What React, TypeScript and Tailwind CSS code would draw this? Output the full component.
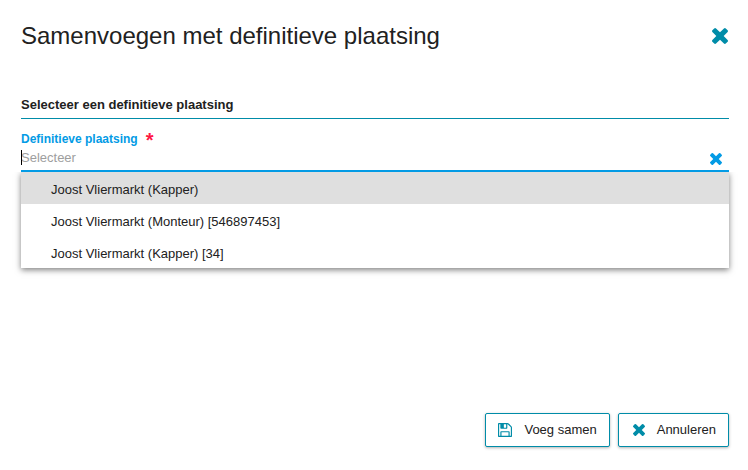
import { useState } from 'react';

const options = [
  'Joost Vliermarkt (Kapper)',
  'Joost Vliermarkt (Monteur) [546897453]',
  'Joost Vliermarkt (Kapper) [34]',
];

function CrossIcon({ className }: { className: string }) {
  return (
    <svg viewBox="302 366 1188 1188" fill="currentColor" aria-hidden="true" className={className}>
      <path d="M1490 1322q0 40-28 68l-136 136q-28 28-68 28t-68-28l-294-294-294 294q-28 28-68 28t-68-28l-136-136q-28-28-28-68t28-68l294-294-294-294q-28-28-28-68t28-68l136-136q28-28 68-28t68 28l294 294 294-294q28-28 68-28t68 28l136 136q28 28 28 68t-28 68l-294 294 294 294q28 28 28 68z" />
    </svg>
  );
}

function SaveIcon({ className }: { className: string }) {
  return (
    <svg viewBox="128 128 1536 1536" fill="currentColor" aria-hidden="true" className={className}>
      <path d="M512 1536h768v-384h-768v384zm896 0h128v-896q0-14-10-38.500t-20-34.500l-281-281q-10-10-34-20t-39-10v416q0 40-28 68t-68 28h-576q-40 0-68-28t-28-68v-416h-128v1280h128v-416q0-40 28-68t68-28h832q40 0 68 28t28 68v416zm-384-928v-320q0-13-9.500-22.500t-22.500-9.500h-192q-13 0-22.500 9.500t-9.500 22.500v320q0 13 9.500 22.500t22.500 9.500h192q13 0 22.500-9.500t9.500-22.500zm640 32v928q0 40-28 68t-68 28h-1344q-40 0-68-28t-28-68v-1344q0-40 28-68t68-28h928q40 0 88 20t76 48l280 280q28 28 48 76t20 88z" />
    </svg>
  );
}

const actionClass =
  'flex h-[34px] items-center rounded-xs border border-[#008ca8] bg-white px-3 text-[13px] text-[#212121] shadow-[0_1px_3px_rgba(0,0,0,0.3)]';

export default function App() {
  const [value, setValue] = useState('');

  return (
    <main className="flex min-h-screen flex-col bg-white pr-[19px] pl-[21px] pt-5 pb-[23px] font-['Liberation_Sans',Arial,sans-serif] text-[13px] text-[#212121]">
      <header className="flex items-center justify-between">
        <h1 className="text-2xl leading-8">Samenvoegen met definitieve plaatsing</h1>
        <button type="button" aria-label="Sluiten" className="pr-px text-[#008ca8]">
          <CrossIcon className="size-4" />
        </button>
      </header>

      <h2 className="mt-11 border-b border-b-[#008ca8] pb-1 text-[13px] leading-[18px] font-bold">
        Selecteer een definitieve plaatsing
      </h2>

      <div className="relative mt-3">
        <label htmlFor="plaatsing" className="flex items-center gap-2 text-xs leading-4 font-bold text-[#039be5]">
          Definitieve plaatsing
          <span className="h-4 text-xl leading-[18px] text-[#ff1744]">*</span>
        </label>
        <div className="relative flex h-[25px] items-center border-b-2 border-[#039be5] pr-[7px]">
          <input
            id="plaatsing"
            type="text"
            role="combobox"
            aria-expanded="true"
            aria-controls="plaatsing-opties"
            placeholder="Selecteer"
            value={value}
            onChange={(event) => setValue(event.target.value)}
            className="h-5 min-w-0 flex-1 self-start bg-transparent outline-none placeholder:text-[#9e9e9e]"
          />
          {value === '' && <span className="absolute top-[3px] left-0 h-[15px] w-px bg-black" />}
          <button type="button" aria-label="Wissen" onClick={() => setValue('')} className="text-[#039be5]">
            <CrossIcon className="size-3" />
          </button>
        </div>
        <ul
          id="plaatsing-opties"
          role="listbox"
          className="absolute top-full right-0 left-0 bg-white shadow-[0_2px_6px_rgba(0,0,0,0.5)] [clip-path:inset(0_-12px_-12px_-12px)]"
        >
          {options.map((option, index) => (
            <li
              key={option}
              role="option"
              aria-selected={index === 0}
              onClick={() => setValue(option)}
              className="px-[30px] pt-1 leading-7 aria-selected:bg-[#dfdfdf]"
            >
              {option}
            </li>
          ))}
        </ul>
      </div>

      <footer className="mt-auto flex justify-end gap-2">
        <button type="button" className={actionClass}>
          <SaveIcon className="mr-3 size-3.5 text-[#008ca8]" />
          Voeg samen
        </button>
        <button type="button" className={actionClass}>
          <CrossIcon className="mr-3 ml-0.5 size-3 text-[#008ca8]" />
          Annuleren
        </button>
      </footer>
    </main>
  );
}
